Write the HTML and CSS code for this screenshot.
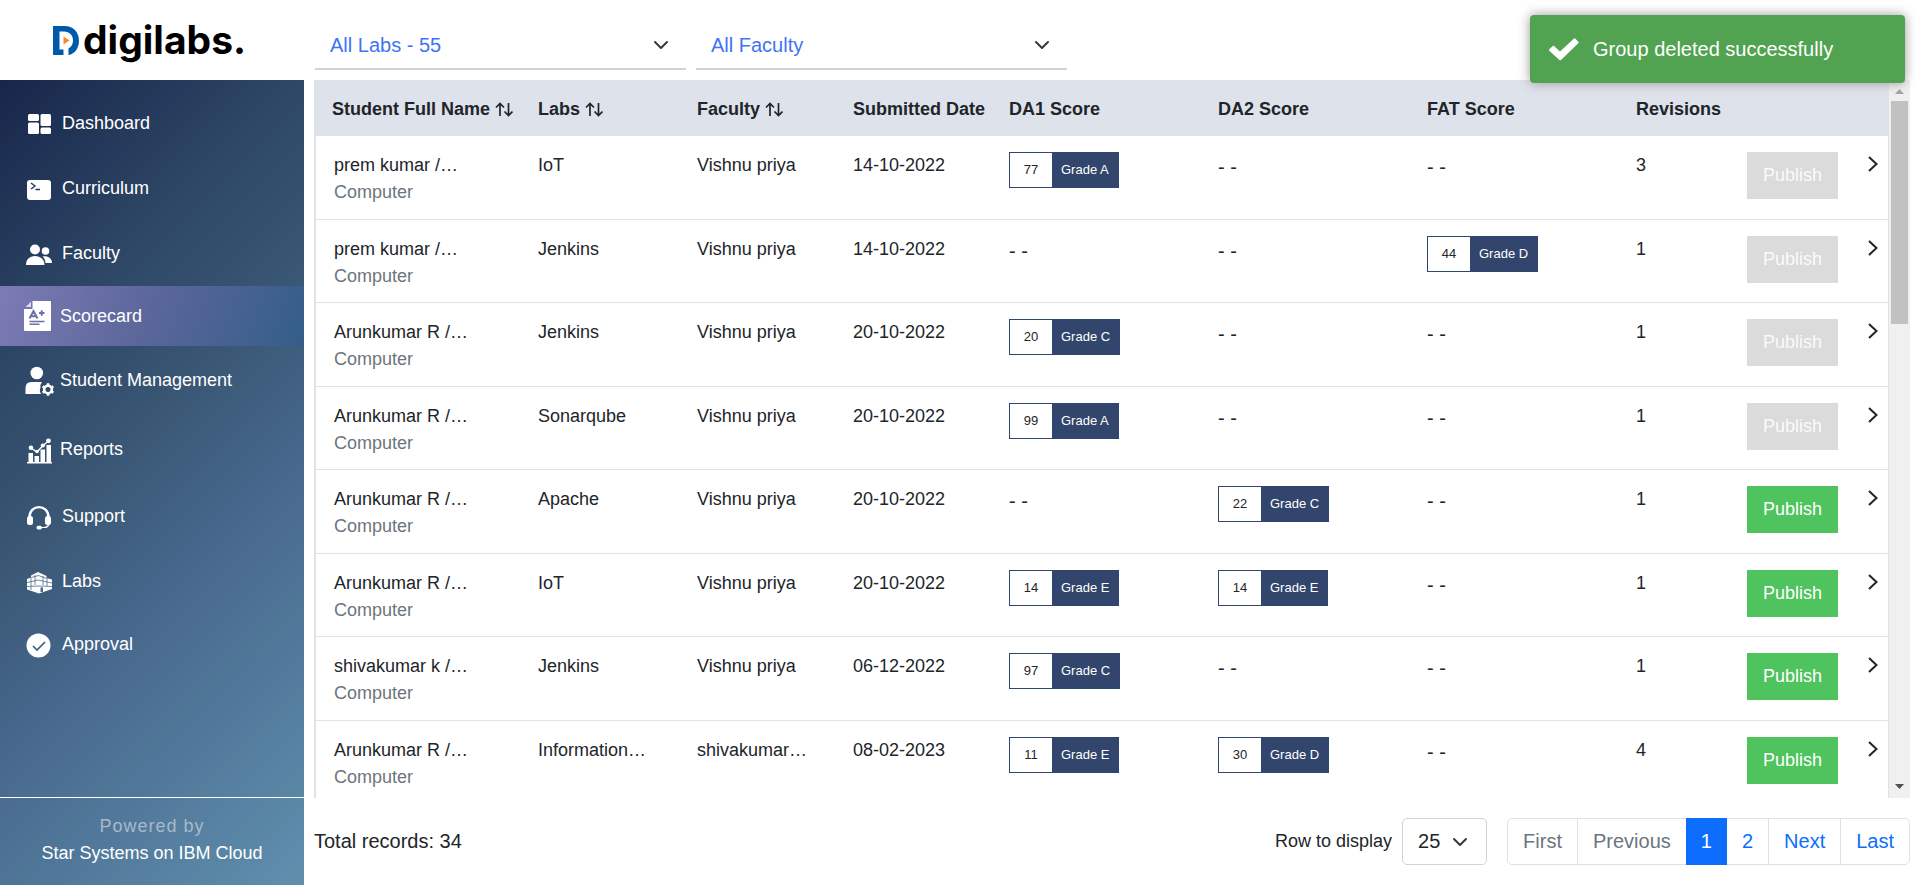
FILE: index.html
```html
<!DOCTYPE html>
<html lang="en">
<head>
<meta charset="utf-8">
<title>Digilabs - Scorecard</title>
<meta name="viewport" content="width=device-width, initial-scale=1">
<link rel="stylesheet" href="styles.css">
</head>
<body>
<svg class="sprite" aria-hidden="true">
  <symbol id="i-down" viewBox="0 0 16 16"><path d="M2 5l6 6 6-6" fill="none" stroke="#343a40" stroke-width="2" stroke-linecap="round" stroke-linejoin="round"/></symbol>
  <symbol id="i-sort" viewBox="0 0 18 15"><path d="M5 14V1.500M1 5.500l4-4 4 4M13.500 1v12.500M9.500 9.500l4 4 4-4" fill="none" stroke="#212529" stroke-width="1.700"/></symbol>
  <symbol id="i-next" viewBox="0 0 10 16"><path d="M1 1l7.500 7L1 15" fill="none" stroke="#212529" stroke-width="2"/></symbol>
</svg>

<div class="app">
  <aside class="side">
    <a class="brand" href="#">
      <svg class="brand-mark" viewBox="0 0 26 29" aria-hidden="true">
        <path fill="#0059ab" d="M0 0h11.500C20 0 26 6 26 14.500 26 22 22 28 15.500 29v-6.500c3-1.500 4.500-4.500 4.500-8C20 9 16.500 5.500 11 5.500H6.500V23.500H10.500V29H0z"/>
        <path fill="#f58a33" d="M10.500 10.500l6 4-6 4z"/>
      </svg>
      <span class="brand-name">digilabs.</span>
    </a>
    <div class="panel">
      <nav class="nav">
        <a class="nav-link" href="#">
          <svg viewBox="0 0 30 30" fill="#fff"><rect x="4" y="5" width="11" height="7" rx="1.500"/><rect x="4" y="13.500" width="11" height="11.500" rx="1.500"/><rect x="16.500" y="5" width="10.500" height="12" rx="1.500"/><rect x="16.500" y="18.500" width="10.500" height="6.500" rx="1.500"/></svg>
          Dashboard
        </a>
        <a class="nav-link" href="#">
          <svg viewBox="0 0 30 30"><rect x="3" y="6" width="24" height="20" rx="3" fill="#fff"/><path d="M7 9l4 3-4 3M11.500 15.500H16" fill="none" stroke="#233960" stroke-width="1.400"/></svg>
          Curriculum
        </a>
        <a class="nav-link" href="#">
          <svg viewBox="0 0 30 30" fill="#fff"><circle cx="11" cy="10.500" r="5"/><path d="M2 26c0-5.500 3.500-9 9-9s9.500 3.500 9.500 9z"/><circle cx="21.500" cy="12" r="3.800"/><path d="M18.500 17.500c5-1 9.500 1.500 9.500 6.500h-6.500c-.3-3-1.200-5-3-6.500z"/></svg>
          Faculty
        </a>
        <a class="nav-link nav-link--short nav-link--near is-active" href="#" aria-current="page">
          <svg viewBox="0 0 30 30"><path d="M8.500 0H26q1 0 1 1v28q0 1-1 1H1q-1 0-1-1V8h8.500z" fill="#fff"/><path d="M1.500 6L7 .8V6z" fill="#dcdcf0"/><path d="M5.500 17.500L9.500 10l4 7.500M7 15.200h5M15 12h5.500M17.700 9.200v5.500" fill="none" stroke="#6b70a6" stroke-width="1.900"/><path d="M5.500 20.500H20.500M5.500 23.200H15.500" stroke="#6b70a6" stroke-width="1.600"/></svg>
          Scorecard
        </a>
        <a class="nav-link nav-link--tall nav-link--near" href="#">
          <svg viewBox="0 0 30 30"><g fill="#fff"><circle cx="12.800" cy="7" r="6.300"/><path d="M1.500 28v-6q0-6 6-6h10.500q-2 2.500-1.500 5-1.500 3.500.5 7z"/></g><circle cx="24" cy="23.500" r="3.800" fill="none" stroke="#fff" stroke-width="2.600"/><path d="M24 17.300v2M24 27.700v2M18.600 20.400l1.800 1M27.600 25.600l1.800 1M18.600 26.600l1.800-1M27.600 21.400l1.800-1" stroke="#fff" stroke-width="2.600"/></svg>
          Student Management
        </a>
        <a class="nav-link nav-link--tall nav-link--near" href="#">
          <svg viewBox="0 0 30 30" fill="#fff"><path d="M4.500 18h4.500v9H4.500zM10.500 21h4.500v6h-4.500zM16.500 14.500h4.500V27h-4.500zM22.500 10H27v17h-4.500zM3 27h25v1.600H3z"/><path d="M7 13l6 4 6-6.500 5-4" fill="none" stroke="#fff" stroke-width="1.400"/><circle cx="7" cy="12.800" r="2.300"/><circle cx="13" cy="16.500" r="1.800"/><circle cx="18.800" cy="10.500" r="2.100"/><circle cx="24.500" cy="5.800" r="2.400"/></svg>
          Reports
        </a>
        <a class="nav-link" href="#">
          <svg viewBox="0 0 30 30"><path d="M5.500 15C5.500 1.800 24.500 1.800 24.500 15" fill="none" stroke="#fff" stroke-width="2.400"/><path d="M25 22q-1 3.500-5 3.500h-5" fill="none" stroke="#fff" stroke-width="1.200"/><g fill="#fff"><rect x="3" y="14" width="6" height="9" rx="2.500"/><rect x="21" y="14" width="6" height="9" rx="2.500"/><rect x="12.500" y="23.800" width="5.500" height="3.600" rx="1.700"/></g></svg>
          Support
        </a>
        <a class="nav-link" href="#">
          <svg viewBox="0 0 30 30"><path d="M3 12l4-1.500V8.500L14 5l8.500 4v2L28 12.500v9.500L15 26.500 3 22.500z" fill="#fff"/><path d="M3 15.500L14 13l14 3M3 19.500l11-.5 14 .5M7 10v13M11 8v10M19 9v9M23 11v8M7.500 10.500L14.500 8.500l8 3" fill="none" stroke="#4b6a88" stroke-width=".8"/><path d="M16.500 20.500h2.500V25h-2.500z" fill="#4b6a88"/></svg>
          Labs
        </a>
        <a class="nav-link nav-link--short" href="#">
          <svg viewBox="0 0 30 30"><circle cx="14.500" cy="16.500" r="12" fill="#fff"/><path d="M9 17l4 4 8-8" fill="none" stroke="#3f5f80" stroke-width="1.700"/></svg>
          Approval
        </a>
      </nav>
      <footer class="powered">
        <span class="powered-by">Powered by</span>
        <span>Star Systems on IBM Cloud</span>
      </footer>
    </div>
  </aside>

  <main class="main">
    <div class="filters">
      <div class="picker">
        <select aria-label="Lab"><option>All Labs - 55</option></select>
        <svg aria-hidden="true"><use href="#i-down"/></svg>
      </div>
      <div class="picker">
        <select aria-label="Faculty"><option>All Faculty</option></select>
        <svg aria-hidden="true"><use href="#i-down"/></svg>
      </div>
    </div>

    <div class="records">
      <div class="scroll">
        <table class="table">
          <colgroup>
            <col class="c-name"><col class="c-lab"><col class="c-fac"><col class="c-date"><col class="c-score"><col class="c-score"><col class="c-score"><col class="c-rev"><col class="c-pub"><col class="c-go">
          </colgroup>
          <thead>
            <tr>
              <th>Student Full Name <svg class="sort" aria-hidden="true"><use href="#i-sort"/></svg></th>
              <th>Labs <svg class="sort" aria-hidden="true"><use href="#i-sort"/></svg></th>
              <th>Faculty <svg class="sort" aria-hidden="true"><use href="#i-sort"/></svg></th>
              <th>Submitted Date</th>
              <th>DA1 Score</th>
              <th>DA2 Score</th>
              <th>FAT Score</th>
              <th>Revisions</th>
              <th></th>
              <th></th>
            </tr>
          </thead>
          <tbody>
            <tr>
              <td>prem kumar /…<div class="dept">Computer</div></td><td>IoT</td><td>Vishnu priya</td><td>14-10-2022</td>
              <td><div class="grade"><span>77</span><b>Grade A</b></div></td>
              <td><div class="none">- -</div></td>
              <td><div class="none">- -</div></td>
              <td>3</td><td><button class="publish" disabled>Publish</button></td>
              <td><button class="go" aria-label="Open"><svg><use href="#i-next"/></svg></button></td>
            </tr>
            <tr>
              <td>prem kumar /…<div class="dept">Computer</div></td><td>Jenkins</td><td>Vishnu priya</td><td>14-10-2022</td>
              <td><div class="none">- -</div></td>
              <td><div class="none">- -</div></td>
              <td><div class="grade"><span>44</span><b>Grade D</b></div></td>
              <td>1</td><td><button class="publish" disabled>Publish</button></td>
              <td><button class="go" aria-label="Open"><svg><use href="#i-next"/></svg></button></td>
            </tr>
            <tr>
              <td>Arunkumar R /…<div class="dept">Computer</div></td><td>Jenkins</td><td>Vishnu priya</td><td>20-10-2022</td>
              <td><div class="grade"><span>20</span><b>Grade C</b></div></td>
              <td><div class="none">- -</div></td>
              <td><div class="none">- -</div></td>
              <td>1</td><td><button class="publish" disabled>Publish</button></td>
              <td><button class="go" aria-label="Open"><svg><use href="#i-next"/></svg></button></td>
            </tr>
            <tr>
              <td>Arunkumar R /…<div class="dept">Computer</div></td><td>Sonarqube</td><td>Vishnu priya</td><td>20-10-2022</td>
              <td><div class="grade"><span>99</span><b>Grade A</b></div></td>
              <td><div class="none">- -</div></td>
              <td><div class="none">- -</div></td>
              <td>1</td><td><button class="publish" disabled>Publish</button></td>
              <td><button class="go" aria-label="Open"><svg><use href="#i-next"/></svg></button></td>
            </tr>
            <tr>
              <td>Arunkumar R /…<div class="dept">Computer</div></td><td>Apache</td><td>Vishnu priya</td><td>20-10-2022</td>
              <td><div class="none">- -</div></td>
              <td><div class="grade"><span>22</span><b>Grade C</b></div></td>
              <td><div class="none">- -</div></td>
              <td>1</td><td><button class="publish">Publish</button></td>
              <td><button class="go" aria-label="Open"><svg><use href="#i-next"/></svg></button></td>
            </tr>
            <tr>
              <td>Arunkumar R /…<div class="dept">Computer</div></td><td>IoT</td><td>Vishnu priya</td><td>20-10-2022</td>
              <td><div class="grade"><span>14</span><b>Grade E</b></div></td>
              <td><div class="grade"><span>14</span><b>Grade E</b></div></td>
              <td><div class="none">- -</div></td>
              <td>1</td><td><button class="publish">Publish</button></td>
              <td><button class="go" aria-label="Open"><svg><use href="#i-next"/></svg></button></td>
            </tr>
            <tr>
              <td>shivakumar k /…<div class="dept">Computer</div></td><td>Jenkins</td><td>Vishnu priya</td><td>06-12-2022</td>
              <td><div class="grade"><span>97</span><b>Grade C</b></div></td>
              <td><div class="none">- -</div></td>
              <td><div class="none">- -</div></td>
              <td>1</td><td><button class="publish">Publish</button></td>
              <td><button class="go" aria-label="Open"><svg><use href="#i-next"/></svg></button></td>
            </tr>
            <tr>
              <td>Arunkumar R /…<div class="dept">Computer</div></td><td>Information…</td><td>shivakumar…</td><td>08-02-2023</td>
              <td><div class="grade"><span>11</span><b>Grade E</b></div></td>
              <td><div class="grade"><span>30</span><b>Grade D</b></div></td>
              <td><div class="none">- -</div></td>
              <td>4</td><td><button class="publish">Publish</button></td>
              <td><button class="go" aria-label="Open"><svg><use href="#i-next"/></svg></button></td>
            </tr>
          </tbody>
        </table>
      </div>
      <div class="bar" aria-hidden="true">
        <svg class="bar-arrow" viewBox="0 0 21 21"><path d="M6 14l4.500-5 4.500 5z" fill="#a3a3a3"/></svg>
        <div class="bar-track"><div class="bar-thumb"></div></div>
        <svg class="bar-arrow" viewBox="0 0 21 21"><path d="M6 7l4.500 5L15 7z" fill="#505050"/></svg>
      </div>
    </div>

    <div class="foot">
      <div class="total">Total records: 34</div>
      <label class="rows-label" for="rows">Row to display</label>
      <div class="rows">
        <select id="rows"><option>25</option></select>
        <svg aria-hidden="true"><use href="#i-down"/></svg>
      </div>
      <nav class="pages" aria-label="Pages">
        <a class="page is-off" href="#">First</a>
        <a class="page is-off" href="#">Previous</a>
        <a class="page is-current" href="#" aria-current="page">1</a>
        <a class="page" href="#">2</a>
        <a class="page" href="#">Next</a>
        <a class="page" href="#">Last</a>
      </nav>
    </div>
  </main>
</div>

<div class="toast" role="status">
  <svg viewBox="0 0 30 23" aria-hidden="true"><path d="M0 11.500L3.800 8q.6-.5 1.200 0l6 5.500L25 .5q.6-.6 1.200 0L29.500 4q.5.5 0 1L12 22q-.8.800-1.600 0L0 12.500q-.4-.5 0-1z" fill="#fff"/></svg>
  <span>Group deleted successfully</span>
</div>
</body>
</html>
```
FILE: styles.css
```css
* { box-sizing: border-box; }

body {
  margin: 0;
  background: #fff;
  color: #212529;
  font: 18px/27px "Liberation Sans", Arial, sans-serif;
}

select, button { font: inherit; color: inherit; border: 0; margin: 0; }
a { text-decoration: none; }
.sprite { display: none; }

.app { display: flex; height: 100vh; }

/* Sidebar */
.side { flex: none; width: 304px; display: flex; flex-direction: column; }

.brand {
  display: flex;
  align-items: center;
  gap: 4px;
  height: 80px;
  padding-left: 53px;
  color: #000;
}
.brand-mark { width: 26px; height: 29px; }
.brand-name { font: 700 39px/48px Inter, "Liberation Sans", sans-serif; }

.panel {
  flex: 1;
  display: flex;
  flex-direction: column;
  color: #fff;
  background: linear-gradient(135deg, #17264a 0%, #2e4767 27%, #3a5775 45%, #46678b 60%, #608fae 100%);
}
.nav { flex: 1; padding-top: 11px; }
.nav-link {
  display: flex;
  align-items: center;
  gap: 8px;
  height: 65px;
  padding-left: 24px;
  color: #fff;
}
.nav-link svg { width: 30px; height: 30px; }
.nav-link--short { height: 60px; }
.nav-link--tall { height: 69px; }
.nav-link--near { gap: 6px; }
.is-active { background: linear-gradient(110deg, #7d7bb5 0%, #5a6699 50%, #335e88 100%); }

.powered {
  display: flex;
  flex-direction: column;
  align-items: center;
  height: 88px;
  padding-top: 15px;
  border-top: 1px solid #fff;
}
.powered-by { color: #a9b9ca; letter-spacing: 1px; }

/* Main column */
.main { flex: 1; min-width: 0; display: flex; flex-direction: column; padding: 0 10px; }

.filters { display: flex; gap: 10px; height: 80px; padding: 22px 0 0 1px; }
.picker { flex: 0 1 371px; display: grid; align-items: center; height: 48px; border-bottom: 2px solid #ced4da; }
.picker select, .picker svg, .rows select, .rows svg { grid-area: 1 / 1; }
.picker select {
  width: 100%;
  height: 46px;
  padding: 0 15px;
  background: none;
  appearance: none;
  color: #3f73f5;
  font-size: 20px;
}
.picker svg, .rows svg { width: 16px; height: 16px; justify-self: end; pointer-events: none; }
.picker svg { margin-right: 17px; }

.records { flex: 1; min-height: 0; display: flex; }
.scroll { flex: 1; overflow-y: auto; scrollbar-width: none; }

.table { width: 100%; table-layout: fixed; border-collapse: separate; border-spacing: 0; white-space: nowrap; }
.c-name { width: 206px; }
.c-lab { width: 159px; }
.c-fac, .c-date { width: 156px; }
.c-score { width: 209px; }
.c-rev { width: 111px; }
.c-pub { width: 121px; }
.c-go { width: 40px; }

th { height: 56px; padding: 2px 0 0 18px; text-align: left; background: #dee2ea; }
.sort { width: 18px; height: 15px; vertical-align: -2px; }
td { height: 84px; padding: 16px 0 0 18px; vertical-align: top; border-bottom: 1px solid #dee2ea; }
tr:nth-child(even) td { height: 83px; }
td:first-child { border-left: 2px solid #dee2ea; }
td:last-child { border-right: 2px solid #dee2ea; }
.dept { color: #6c757d; }
.none { font-size: 20px; line-height: 30px; }

.grade { display: inline-flex; height: 36px; border: 1px solid #32456c; font-size: 13px; line-height: 34px; }
.grade span { width: 42px; text-align: center; }
.grade b { padding: 0 9px; font-weight: 400; color: #fff; background: #32456c; }

.publish { display: block; height: 47px; padding: 0 16px; color: #fff; background: #4fc35d; }
.publish:disabled { background: #dbdbdb; color: #fafafa; }
.go { display: block; padding: 4px 0; background: none; }
.go svg { display: block; width: 10px; height: 16px; }

.bar { flex: none; width: 21px; display: flex; flex-direction: column; background: #f0f0f0; }
.bar-arrow { width: 21px; height: 21px; }
.bar-track { flex: 1; padding: 0 2px; }
.bar-thumb { height: 33%; background: #c1c1c1; }

/* Footer */
.foot { display: flex; align-items: center; height: 87px; }
.total { flex: 1; font-size: 20px; }
.rows-label { margin-right: 10px; }
.rows { display: grid; align-items: center; width: 85px; height: 47px; margin-right: 20px; border: 1px solid #ced4da; border-radius: 5px; font-size: 20px; }
.rows select { width: 100%; height: 45px; padding: 0 15px; background: none; appearance: none; }
.rows svg { margin-right: 18px; }

.pages { display: flex; height: 47px; font-size: 20px; border: 1px solid #dee2e6; border-radius: 5px; }
.page { display: flex; align-items: center; padding: 0 15px; color: #0d6efd; border-left: 1px solid #dee2e6; }
.page:first-child, .is-current, .is-current + .page { border-left: 0; }
.is-off { color: #6c757d; }
.is-current { margin: -1px 0; color: #fff; background: #0d6efd; }

/* Notification */
.toast {
  position: absolute;
  top: 15px;
  right: 15px;
  width: 375px;
  height: 68px;
  display: flex;
  align-items: center;
  gap: 14px;
  padding-left: 19px;
  color: #fff;
  background: #51a351;
  border-radius: 4px;
  box-shadow: 0 0 12px #999;
  font-size: 20px;
}
.toast svg { width: 30px; height: 23px; }
```
